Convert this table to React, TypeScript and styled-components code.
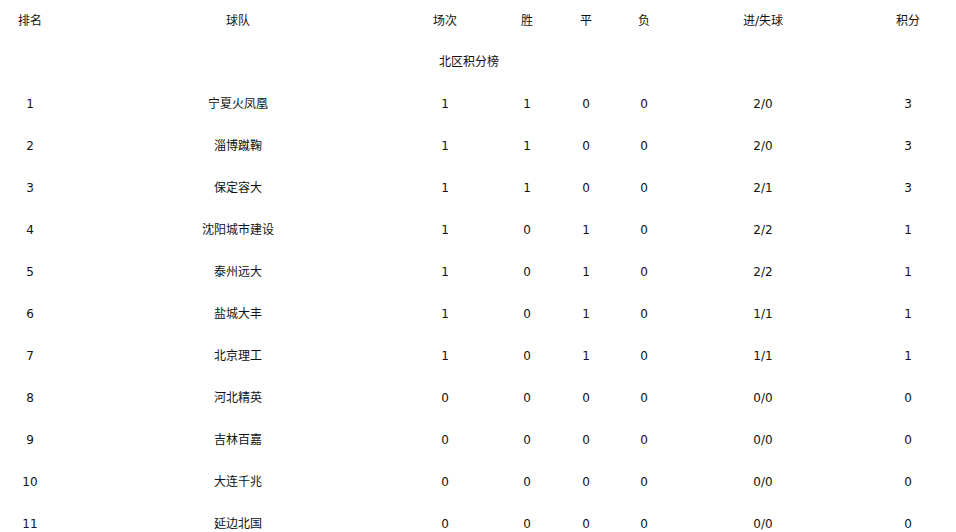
import React from 'react';
import styled, { createGlobalStyle } from 'styled-components';

type TeamRow = {
  rank: number;
  team: string;
  played: number;
  won: number;
  drawn: number;
  lost: number;
  goals: string;
  points: number;
};

const headers = ['排名', '球队', '场次', '胜', '平', '负', '进/失球', '积分'];

const rows: TeamRow[] = [
  { rank: 1, team: '宁夏火凤凰', played: 1, won: 1, drawn: 0, lost: 0, goals: '2/0', points: 3 },
  { rank: 2, team: '淄博蹴鞠', played: 1, won: 1, drawn: 0, lost: 0, goals: '2/0', points: 3 },
  { rank: 3, team: '保定容大', played: 1, won: 1, drawn: 0, lost: 0, goals: '2/1', points: 3 },
  { rank: 4, team: '沈阳城市建设', played: 1, won: 0, drawn: 1, lost: 0, goals: '2/2', points: 1 },
  { rank: 5, team: '泰州远大', played: 1, won: 0, drawn: 1, lost: 0, goals: '2/2', points: 1 },
  { rank: 6, team: '盐城大丰', played: 1, won: 0, drawn: 1, lost: 0, goals: '1/1', points: 1 },
  { rank: 7, team: '北京理工', played: 1, won: 0, drawn: 1, lost: 0, goals: '1/1', points: 1 },
  { rank: 8, team: '河北精英', played: 0, won: 0, drawn: 0, lost: 0, goals: '0/0', points: 0 },
  { rank: 9, team: '吉林百嘉', played: 0, won: 0, drawn: 0, lost: 0, goals: '0/0', points: 0 },
  { rank: 10, team: '大连千兆', played: 0, won: 0, drawn: 0, lost: 0, goals: '0/0', points: 0 },
  { rank: 11, team: '延边北国', played: 0, won: 0, drawn: 0, lost: 0, goals: '0/0', points: 0 },
];

const App = () => {
  return (
    <>
      <GlobalStyle />
      <Standings>
        <Row $height={40}>
          {headers.map((h) => (
            <Cell key={h}>{h}</Cell>
          ))}
        </Row>
        <Row $height={42}>
          <Caption>北区积分榜</Caption>
        </Row>
        {rows.map((r) => (
          <Row key={r.rank} $height={42}>
            <Cell>{r.rank}</Cell>
            <Cell>{r.team}</Cell>
            <Cell>{r.played}</Cell>
            <Cell>{r.won}</Cell>
            <Cell>{r.drawn}</Cell>
            <Cell>{r.lost}</Cell>
            <Cell>{r.goals}</Cell>
            <Cell>{r.points}</Cell>
          </Row>
        ))}
      </Standings>
    </>
  );
};

const GlobalStyle = createGlobalStyle`
  html, body {
    margin: 0;
    background: #ffffff;
    overflow: hidden;
  }
  body {
    font-family: "DejaVu Sans", "Noto Sans CJK SC", sans-serif;
    font-size: 12px;
    color: #111111;
  }
`;

const Standings = styled.div`
  display: flex;
  flex-direction: column;
  width: 956px;
  padding-top: 1px;
`;

const Row = styled.div<{ $height: number }>`
  display: grid;
  grid-template-columns: 60px 356px 58px 106px 12px 104px 134px 156px;
  height: ${({ $height }) => $height}px;
  align-items: center;
`;

const Cell = styled.div`
  display: flex;
  justify-content: center;
  white-space: nowrap;
  font-size: 12px;
  line-height: 14px;
`;

const Caption = styled.div`
  grid-column: 3 / 7;
  padding-left: 23px;
  font-size: 12px;
  line-height: 14px;
  white-space: nowrap;
`;

export default App;
